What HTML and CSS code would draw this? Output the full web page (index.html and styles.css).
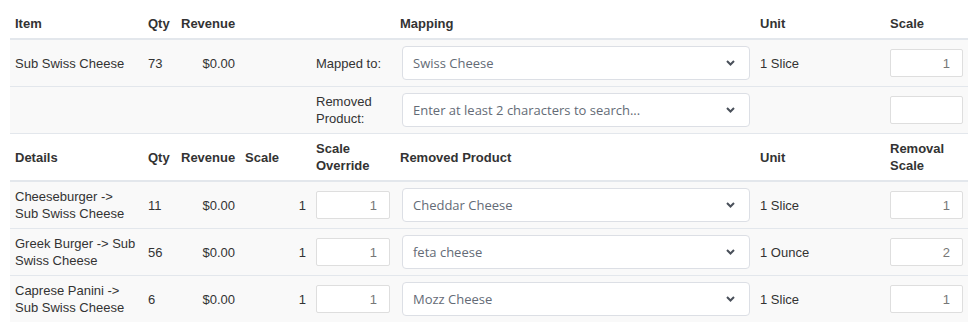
FILE: index.html
```html
<!DOCTYPE html>
<html lang="en">
<head>
  <meta charset="UTF-8">
  <title>Item Mapping</title>
  <link rel="stylesheet" href="styles.css">
</head>
<body>
  <table class="mapping-table">
    <colgroup>
      <col class="col-item">
      <col class="col-qty">
      <col class="col-revenue">
      <col class="col-scale">
      <col class="col-override">
      <col class="col-product">
      <col class="col-unit">
      <col class="col-removal">
    </colgroup>
    <thead>
      <tr class="head-row">
        <th>Item</th>
        <th>Qty</th>
        <th>Revenue</th>
        <th></th>
        <th></th>
        <th>Mapping</th>
        <th>Unit</th>
        <th>Scale</th>
      </tr>
    </thead>
    <tbody>
      <tr class="item-row">
        <td>Sub Swiss Cheese</td>
        <td>73</td>
        <td class="num">$0.00</td>
        <td></td>
        <td>Mapped to:</td>
        <td>
          <div class="select-box">
            <span>Swiss Cheese</span>
            <svg class="chevron" width="9" height="6" viewBox="0 0 9 6"><path d="M1 1l3.5 3.5L8 1"/></svg>
          </div>
        </td>
        <td>1 Slice</td>
        <td><input class="scale-input" type="text" value="1"></td>
      </tr>
      <tr class="item-row">
        <td></td>
        <td></td>
        <td></td>
        <td></td>
        <td>Removed Product:</td>
        <td>
          <div class="select-box">
            <span>Enter at least 2 characters to search...</span>
            <svg class="chevron" width="9" height="6" viewBox="0 0 9 6"><path d="M1 1l3.5 3.5L8 1"/></svg>
          </div>
        </td>
        <td></td>
        <td><input class="scale-input" type="text" value=""></td>
      </tr>
      <tr class="head-row">
        <th>Details</th>
        <th>Qty</th>
        <th>Revenue</th>
        <th>Scale</th>
        <th>Scale Override</th>
        <th>Removed Product</th>
        <th>Unit</th>
        <th>Removal Scale</th>
      </tr>
      <tr class="item-row">
        <td>Cheeseburger -&gt; Sub Swiss Cheese</td>
        <td>11</td>
        <td class="num">$0.00</td>
        <td class="num">1</td>
        <td><input class="scale-input" type="text" value="1"></td>
        <td>
          <div class="select-box">
            <span>Cheddar Cheese</span>
            <svg class="chevron" width="9" height="6" viewBox="0 0 9 6"><path d="M1 1l3.5 3.5L8 1"/></svg>
          </div>
        </td>
        <td>1 Slice</td>
        <td><input class="scale-input" type="text" value="1"></td>
      </tr>
      <tr class="item-row">
        <td>Greek Burger -&gt; Sub Swiss Cheese</td>
        <td>56</td>
        <td class="num">$0.00</td>
        <td class="num">1</td>
        <td><input class="scale-input" type="text" value="1"></td>
        <td>
          <div class="select-box">
            <span>feta cheese</span>
            <svg class="chevron" width="9" height="6" viewBox="0 0 9 6"><path d="M1 1l3.5 3.5L8 1"/></svg>
          </div>
        </td>
        <td>1 Ounce</td>
        <td><input class="scale-input" type="text" value="2"></td>
      </tr>
      <tr class="item-row last">
        <td>Caprese Panini -&gt; Sub Swiss Cheese</td>
        <td>6</td>
        <td class="num">$0.00</td>
        <td class="num">1</td>
        <td><input class="scale-input" type="text" value="1"></td>
        <td>
          <div class="select-box">
            <span>Mozz Cheese</span>
            <svg class="chevron" width="9" height="6" viewBox="0 0 9 6"><path d="M1 1l3.5 3.5L8 1"/></svg>
          </div>
        </td>
        <td>1 Slice</td>
        <td><input class="scale-input" type="text" value="1"></td>
      </tr>
    </tbody>
  </table>
</body>
</html>
```

FILE: styles.css
```css
body {
  margin: 9px 10px;
  font-family: "Liberation Sans", Arial, sans-serif;
  font-size: 13px;
  line-height: 17px;
  color: #333;
  background: #fff;
}
.mapping-table {
  width: 958px;
  table-layout: fixed;
  border-collapse: separate;
  border-spacing: 0;
}
.col-item { width: 133px; }
.col-qty { width: 33px; }
.col-revenue { width: 64px; }
.col-scale { width: 71px; }
.col-override { width: 84px; }
.col-product { width: 360px; }
.col-unit { width: 130px; }
.col-removal { width: 83px; }
th, td {
  padding: 6px 5px;
  text-align: left;
  vertical-align: middle;
}
.head-row th {
  font-weight: bold;
  border-bottom: 2px solid #e3e7ec;
  background: #fff;
}
.item-row td {
  background: #f9f9f9;
  border-bottom: 1px solid #e3e7ec;
}
.item-row.last td {
  border-bottom: none;
}
.num {
  text-align: right;
}
.select-box {
  display: flex;
  align-items: center;
  justify-content: space-between;
  box-sizing: border-box;
  height: 34px;
  margin-left: 2px;
  padding: 0 14px 0 10px;
  background: #fff;
  border: 1px solid #dcdfe5;
  border-radius: 4px;
  font-family: "Open Sans", sans-serif;
  font-size: 13px;
  color: #646b76;
}
.chevron {
  flex: none;
}
.chevron path {
  fill: none;
  stroke: #4a505a;
  stroke-width: 2;
}
.scale-input {
  display: block;
  box-sizing: border-box;
  width: 100%;
  height: 28px;
  margin: 0;
  padding: 0 12px;
  border: 1px solid #dedede;
  border-radius: 2px;
  background: #fff;
  font-family: "Liberation Sans", Arial, sans-serif;
  font-size: 13px;
  color: #777;
  text-align: right;
}
```
